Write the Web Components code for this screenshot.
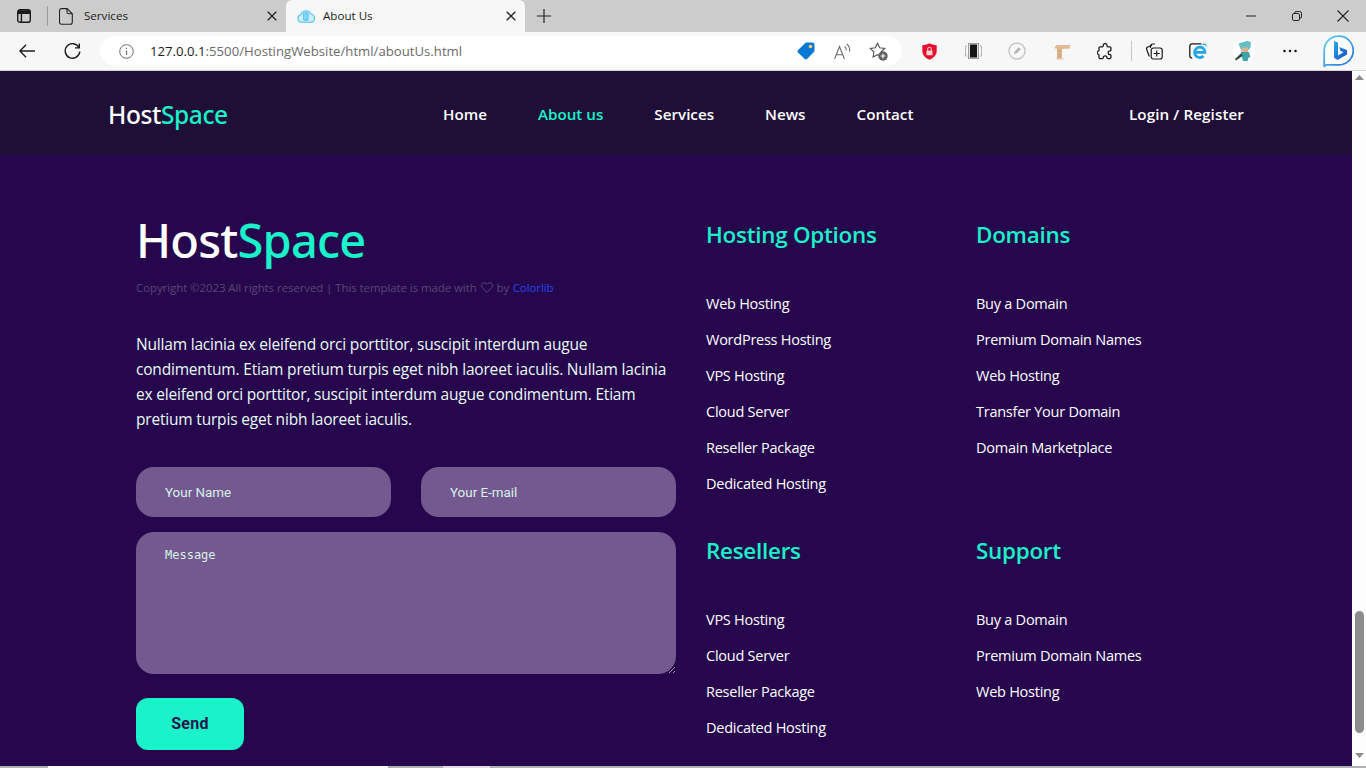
<!DOCTYPE html>
<html lang="en">
<head>
<meta charset="utf-8">
<title>About Us</title>
<style>
    html, body { margin: 0; height: 100%; overflow: hidden; }
    body { display: flex; flex-direction: column; height: 768px; font-family: "Open Sans", "Noto Sans", sans-serif; background: #26074d; }
</style>
</head>
<body>
<browser-chrome></browser-chrome>
<page-view>
    <site-nav></site-nav>
    <site-footer>
        <brand-block></brand-block>
        <contact-form></contact-form>
        <link-column slot="links" heading="Hosting Options" items="Web Hosting|WordPress Hosting|VPS Hosting|Cloud Server|Reseller Package|Dedicated Hosting"></link-column>
        <link-column slot="links" heading="Domains" items="Buy a Domain|Premium Domain Names|Web Hosting|Transfer Your Domain|Domain Marketplace"></link-column>
        <link-column slot="links" heading="Resellers" items="VPS Hosting|Cloud Server|Reseller Package|Dedicated Hosting"></link-column>
        <link-column slot="links" heading="Support" items="Buy a Domain|Premium Domain Names|Web Hosting"></link-column>
    </site-footer>
</page-view>
<desk-strip></desk-strip>

<script>
class BrowserTab extends HTMLElement {
    constructor() {
        super();
        this.attachShadow({ mode: 'open' });
    }

    connectedCallback() {
        this.shadowRoot.innerHTML = `
            <style>
                :host { display: flex; align-items: center; height: 32px; box-sizing: border-box; font-size: 11.6px; color: #1c1c1c; }
                :host([active]) { background: #f7f7f7; border-radius: 6px 6px 0 0; }
                .label { flex: 1; padding-bottom: 2px; }
                .close { width: 10px; height: 10px; margin-right: 9px; }
                ::slotted(svg) { flex: none; }
            </style>
            <slot></slot>
            <span class="label">${this.getAttribute('label')}</span>
            <svg class="close" viewBox="0 0 10 10" fill="none" stroke="#222" stroke-width="1.3"><path d="M.7.7l8.6 8.6M9.3.7L.7 9.3"/></svg>
        `;
    }
}

class ToolButton extends HTMLElement {
    constructor() {
        super();
        this.attachShadow({ mode: 'open' });
        this.shadowRoot.innerHTML = `
            <style>
                :host { display: flex; align-items: center; justify-content: center; flex: none; width: 44px; height: 38px; }
            </style>
            <slot></slot>
        `;
    }
}

class BrowserChrome extends HTMLElement {
    constructor() {
        super();
        this.attachShadow({ mode: 'open' });
    }

    connectedCallback() {
        this.shadowRoot.innerHTML = `
            <style>
                :host { display: block; flex: none; height: 71px; background: #f7f7f7; }
                .strip { display: flex; align-items: center; height: 32px; background: #cccccc; }
                .panes { margin-left: 17px; }
                .sep { width: 1px; height: 20px; background: #9a9a9a; margin: 0 11px 0 16px; }
                .tab-a { width: 227px; }
                .tab-b { width: 239px; margin-left: 0; }
                .plus { margin-left: 12px; }
                .win { display: flex; align-items: center; margin-left: auto; }
                .win svg { display: block; }
                .bar { display: flex; align-items: center; height: 38px; padding-left: 5px; border-bottom: 1px solid #d4d4d4; }
                .pill { display: flex; align-items: center; flex: none; box-sizing: border-box; width: 802px; height: 30px; margin: 0 5px 0 6px; padding-right: 5px; border-radius: 15px; background: #fff; }
                .pill tool-button { width: 36.5px; }
                .url { flex: 1; display: flex; align-items: center; font-size: 13.18px; color: #6b6b6b; white-space: nowrap; }
                .url b { font-weight: 400; color: #1c1c1c; }
                .url svg { margin: 0 16px 0 19px; }
                .div { width: 1px; height: 20px; background: #c8c8c8; margin: 0 0 0 4px; }
            </style>
            <div class="strip">
                <svg class="panes" width="14" height="14" viewBox="0 0 14 14" fill="none" stroke="#1a1a1a" stroke-width="1.4"><rect x=".7" y=".7" width="12.6" height="12.6" rx="2.4"/><path d="M.7 4.2h12.6M4.4 4.2v9" /><path d="M1 1.2h12v3H1z" fill="#1a1a1a" stroke="none"/></svg>
                <div class="sep"></div>
                <browser-tab class="tab-a" label="Services">
                    <svg width="14" height="17" viewBox="0 0 14 17" fill="none" stroke="#222" stroke-width="1.1" style="margin:0 11px 0 0"><path d="M2.5.6h5.6l5.2 5.2v8.4a2 2 0 0 1-2 2H2.5a2 2 0 0 1-2-2V2.6a2 2 0 0 1 2-2z"/><path d="M8 .8v3.4a1.6 1.6 0 0 0 1.6 1.6H13"/></svg>
                </browser-tab>
                <browser-tab class="tab-b" active label="About Us">
                    <svg width="18" height="14" viewBox="0 0 18 14" style="margin:0 8px 0 11px"><path d="M4.5 13.3a3.8 3.8 0 0 1-.6-7.5A5.2 5.2 0 0 1 13.8 5a4.2 4.2 0 0 1 .2 8.3z" fill="#cdeefc" stroke="#4fc3f3" stroke-width="1.1"/><rect x="6.5" y="3.4" width="4.6" height="8" rx=".8" fill="#7ed6f8" stroke="#3fb6ea" stroke-width=".7"/></svg>
                </browser-tab>
                <svg class="plus" width="14" height="14" viewBox="0 0 14 14" stroke="#222" stroke-width="1.2"><path d="M7 0v14M0 7h14"/></svg>
                <div class="win">
                    <tool-button style="width:46px"><svg width="10" height="2" viewBox="0 0 10 2" stroke="#222"><path d="M0 1h10"/></svg></tool-button>
                    <tool-button style="width:46px"><svg width="10" height="10" viewBox="0 0 10 10" fill="none" stroke="#222"><rect x=".5" y="2.5" width="7" height="7" rx="1.4"/><path d="M2.7 2.3V1.9A1.4 1.4 0 0 1 4.1.5h3.6a1.8 1.8 0 0 1 1.8 1.8v3.6a1.4 1.4 0 0 1-1.4 1.4"/></svg></tool-button>
                    <tool-button style="width:46px"><svg width="12" height="12" viewBox="0 0 12 12" stroke="#222" stroke-width="1.1"><path d="M.5.5l11 11M11.5.5l-11 11"/></svg></tool-button>
                </div>
            </div>
            <div class="bar">
                <tool-button><svg width="16" height="14" viewBox="0 0 16 14" fill="none" stroke="#1c1c1c" stroke-width="1.4"><path d="M16 7H1M7 .8L.9 7 7 13.2"/></svg></tool-button>
                <tool-button style="margin-left:1px"><svg width="17" height="17" viewBox="0 0 17 17" fill="none" stroke="#1c1c1c" stroke-width="1.4"><path d="M14.9 4.4A7.3 7.3 0 1 0 15.8 8.5"/><path d="M15.3.6v4.3h-4.3"/></svg></tool-button>
                <div class="pill">
                    <div class="url">
                        <svg width="15" height="15" viewBox="0 0 15 15" fill="none" stroke="#6a6a6a"><circle cx="7.5" cy="7.5" r="6.8"/><path d="M7.5 6.5v4.500M7.5 3.800v1.200" stroke-width="1.2"/></svg>
                        <span><b>127.0.0.1</b>:5500/HostingWebsite/html/aboutUs.html</span>
                    </div>
                    <tool-button><svg width="18" height="18" viewBox="0 0 18 18"><path d="M9.5.6h6a2 2 0 0 1 2 2v6a2 2 0 0 1-.6 1.4l-6.600 6.700a2 2 0 0 1-2.800 0L1.200 10.800a2 2 0 0 1 0-2.800L8 1.200A2 2 0 0 1 9.500.6z" fill="#0a78d4"/><circle cx="13.500" cy="4.500" r="1.700" fill="#ffd75e"/></svg></tool-button>
                    <tool-button><svg width="17" height="17" viewBox="0 0 17 17" fill="none" stroke="#6a6a6a" stroke-width="1.1"><path d="M.6 16L5.500 3.500 10.400 16M2.300 11.700h6.400"/><path d="M10.600 3.200a4.500 4.500 0 0 1 1.500 4.300M12.800 1a7.500 7.500 0 0 1 2.700 7.500"/></svg></tool-button>
                    <tool-button><svg width="19" height="19" viewBox="0 0 19 19"><path d="M8.500 1.200l2.200 4.600 5 .7-3.600 3.500.8 5-4.400-2.300-4.400 2.300.8-5L1.300 6.500l5-.7z" fill="none" stroke="#555" stroke-width="1.1"/><circle cx="14" cy="14" r="4.700" fill="#5f5f5f"/><path d="M14 11.600v4.800M11.600 14h4.800" stroke="#fff" stroke-width="1.1"/></svg></tool-button>
                </div>
                <tool-button><svg width="15" height="17" viewBox="0 0 15 17"><path d="M7.500.3C9.500 1.500 12 2.100 14.700 2.200V8c0 4-3 7.200-7.200 8.700C3.300 15.200.3 12 .3 8V2.200C3 2.100 5.500 1.500 7.500.3z" fill="#e8112d"/><rect x="4.500" y="7.500" width="6" height="4.800" rx=".6" fill="#fbd6da"/><path d="M5.700 7.500V6a1.800 1.800 0 0 1 3.600 0v1.500" fill="none" stroke="#fbd6da"/></svg></tool-button>
                <tool-button><svg width="17" height="16" viewBox="0 0 17 16"><rect x="3.500" y=".5" width="10" height="15" fill="#e4e4e4" stroke="#9d9d9d"/><rect x="5" y="1.500" width="7" height="13" fill="#161616"/><path d="M2 3H.5v10H2M15 3h1.500v10H15" fill="none" stroke="#b5b5b5"/></svg></tool-button>
                <tool-button><svg width="18" height="18" viewBox="0 0 18 18" fill="none"><circle cx="9" cy="9" r="8" stroke="#c6c6c6" stroke-width="1.4"/><path d="M5.800 12.300l1-3 4-4 2.100 2-4 4z" fill="#b5b5b5"/></svg></tool-button>
                <tool-button style="margin-left:1px"><svg width="17" height="18" viewBox="0 0 17 18"><ellipse cx="6" cy="16.800" rx="4.500" ry="1.200" fill="#e6e0da"/><rect x="3" y="3.500" width="5" height="13" rx="1" fill="#dcae86"/><path d="M3 3.500h5v2H3z" fill="#c08d62"/><path d="M1 4.500l2-1.500h13v3.500L7.500 7 4 6.800 1 6.500z" fill="#e3b892"/></svg></tool-button>
                <tool-button style="margin-left:-1px"><svg width="16" height="17" viewBox="0 0 16 17" fill="none" stroke="#1c1c1c" stroke-width="1.3"><path d="M6.200 3V2.500a1.900 1.900 0 0 1 3.800 0V3c0 .5.300.8.800.8h2.100c.6 0 1 .4 1 1v2.400c0 .4-.4.700-.8.700a1.900 1.900 0 0 0 0 3.800c.4 0 .8.300.8.700v2.200c0 .6-.4 1-1 1H10.700c-.4 0-.7-.4-.7-.8a1.900 1.900 0 0 0-3.800 0c0 .4-.3.800-.7.800H3c-.6 0-1-.4-1-1v-2.600c0-.4-.3-.7-.7-.7a1.800 1.800 0 0 1 0-3.300c.4 0 .7-.3.700-.7V4.800c0-.6.400-1 1-1h2.400c.5 0 .8-.3.800-.8z"/></svg></tool-button>
                <div class="div"></div>
                <tool-button><svg width="18" height="18" viewBox="0 0 18 18" fill="none" stroke="#1c1c1c" stroke-width="1.2"><path d="M4.300 14.500L1.700 7.500C1.300 6.400 1.800 5.400 2.800 5L7 3.300"/><path d="M6.500 5V3a2 2 0 0 1 2-2h2.500" transform="translate(-1 1)"/><rect x="6.200" y="6" width="11" height="11" rx="2.200"/><path d="M11.700 8.500v6M8.700 11.500h6"/></svg></tool-button>
                <tool-button><svg width="18" height="17" viewBox="0 0 18 17" fill="none"><path d="M12.500.8H3.200A2.500 2.500 0 0 0 .8 3.200v9.600a2.500 2.500 0 0 0 2.400 2.400" stroke="#1c1c1c" stroke-width="1.3"/><path d="M5.800 9.300h10.200A5.200 5.200 0 1 0 14.500 13" stroke="#1ea7e8" stroke-width="2.700"/><path d="M13.500 1.800c2.600-1.300 3.800-.6 3.300 1.600" stroke="#1ea7e8" stroke-width="1.200"/></svg></tool-button>
                <tool-button style="margin-left:2px"><svg width="22" height="22" viewBox="0 0 22 22"><circle cx="11" cy="11" r="11" fill="#fff"/><path d="M5.500 3.500L14.500.8 18 2.500l-.5 5-2 2.500H8z" fill="#66bfc4"/><rect x="8.500" y="7.500" width="6.500" height="4.500" fill="#d8b490"/><path d="M8 12h8l1.500 5.500H15.500l-1 3.500h-4.500l-1-3.500z" fill="#3fa3a8"/><path d="M8.500 13L2 19l1 1.500L9.500 16z" fill="#2c4a43"/></svg></tool-button>
                <tool-button style="margin-left:2px"><svg width="14" height="4" viewBox="0 0 14 4" fill="#1c1c1c"><circle cx="1.500" cy="2" r="1.300"/><circle cx="7" cy="2" r="1.300"/><circle cx="12.500" cy="2" r="1.300"/></svg></tool-button>
                <tool-button style="margin-left:4px"><svg width="31" height="33" viewBox="0 0 31 33"><defs><linearGradient id="bing-line" x1="0" y1="0" x2="1" y2="1"><stop offset="0" stop-color="#63d0f5"/><stop offset="1" stop-color="#1f6fd8"/></linearGradient><linearGradient id="bing-b" x1="0" y1="0" x2="1" y2="1"><stop offset="0" stop-color="#25a8e8"/><stop offset="1" stop-color="#1b4fc4"/></linearGradient></defs><path d="M15.500 1.200a14.300 14.300 0 0 1 1 28.600H3.500c-1.500 0-2.200 1.600-2.300 2.200V15.500A14.300 14.300 0 0 1 15.500 1.200z" fill="#fff" stroke="url(#bing-line)" stroke-width="1.800"/><path d="M11 6l4 1.400v13.100l5.500-3.200-3-1.300-1.500-4 8 3v4.500l-9.500 5.500-3.500-2.300z" fill="url(#bing-b)"/></svg></tool-button>
            </div>
        `;
    }
}

class PageView extends HTMLElement {
    constructor() {
        super();
        this.attachShadow({ mode: 'open' });
        this.shadowRoot.innerHTML = `
            <style>
                :host { display: flex; flex: 1; min-height: 0; overflow: hidden; }
                .content { flex: 1; min-width: 0; display: flex; flex-direction: column; }
                .track { flex: none; width: 14px; display: flex; flex-direction: column; align-items: center; background: #fdfdfd; }
                .up { margin-top: 4px; }
                .thumb { width: 9px; height: 122px; margin-top: 531px; border-radius: 5px; background: #8c8c8c; }
                .down { margin-top: 20px; }
            </style>
            <div class="content"><slot></slot></div>
            <div class="track">
                <svg class="up" width="9" height="5" viewBox="0 0 9 5" fill="#8c8c8c"><path d="M4.500 0L9 5H0z"/></svg>
                <div class="thumb"></div>
                <svg class="down" width="9" height="5" viewBox="0 0 9 5" fill="#8c8c8c"><path d="M0 0h9L4.500 5z"/></svg>
            </div>
        `;
    }
}

class SiteNav extends HTMLElement {
    constructor() {
        super();
        this.attachShadow({ mode: 'open' });
        this.shadowRoot.innerHTML = `
            <style>
                :host { display: flex; flex: none; align-items: center; box-sizing: border-box; height: 84px; padding: 1px 0 0 108px; background: #1f0f36; color: #fff; font-size: 15.2px; font-weight: 600; }
                .logo { width: 335px; padding-top: 2px; font-family: "Noto Sans", sans-serif; font-size: 24.5px; font-weight: 500; letter-spacing: -.4px; color: #fff; }
                .logo span { color: #1af2c9; }
                nav { display: flex; gap: 51px; }
                nav a, .login { color: inherit; text-decoration: none; white-space: nowrap; }
                nav a.on { color: #1af2c9; }
                .login { margin-left: auto; margin-right: 108px; letter-spacing: .1px; }
            </style>
            <div class="logo">Host<span>Space</span></div>
            <nav>
                <a href="#">Home</a>
                <a href="#" class="on">About us</a>
                <a href="#">Services</a>
                <a href="#">News</a>
                <a href="#">Contact</a>
            </nav>
            <a href="#" class="login">Login / Register</a>
        `;
    }
}

class SiteFooter extends HTMLElement {
    constructor() {
        super();
        this.attachShadow({ mode: 'open' });
        this.shadowRoot.innerHTML = `
            <style>
                :host { display: grid; flex: 1; grid-template-columns: 570px 540px; padding: 49px 0 0 136px; background: #26074d; align-content: start; }
                .left { width: 540px; }
                .links { display: grid; grid-template-columns: 270px 270px; grid-template-rows: 316px auto; }
            </style>
            <div class="left"><slot></slot></div>
            <div class="links"><slot name="links"></slot></div>
        `;
    }
}

class BrandBlock extends HTMLElement {
    constructor() {
        super();
        this.attachShadow({ mode: 'open' });
        this.shadowRoot.innerHTML = `
            <style>
                :host { display: block; color: #fff; }
                .logo { font-family: "Noto Sans", sans-serif; font-size: 47px; font-weight: 500; line-height: 72px; letter-spacing: -.8px; }
                .logo span { color: #1af2c9; }
                .copy { display: flex; align-items: center; margin-top: 1px; height: 20px; font-size: 11.5px; letter-spacing: -.09px; color: #5a4675; white-space: nowrap; }
                .copy svg { margin: 0 4px; }
                .copy a { color: #1f48ee; text-decoration: none; margin-left: 3.5px; }
                p { margin: 35px 0 0; font-size: 15.5px; line-height: 25px; color: #e9fbf6; letter-spacing: -.19px; }
            </style>
            <div class="logo">Host<span>Space</span></div>
            <div class="copy">Copyright ©2023 All rights reserved | This template is made with<svg width="12" height="11" viewBox="0 0 12 11" fill="none" stroke="#5a4675"><path d="M6 10.300L1.200 5.500A2.800 2.800 0 0 1 5.200 1.500L6 2.300l.8-.8a2.800 2.800 0 0 1 4 4z"/></svg>by<a href="#">Colorlib</a></div>
            <p>Nullam lacinia ex eleifend orci porttitor, suscipit interdum augue condimentum. Etiam pretium turpis eget nibh laoreet iaculis. Nullam lacinia ex eleifend orci porttitor, suscipit interdum augue condimentum. Etiam pretium turpis eget nibh laoreet iaculis.</p>
        `;
    }
}

class ContactForm extends HTMLElement {
    constructor() {
        super();
        this.attachShadow({ mode: 'open' });
        this.shadowRoot.innerHTML = `
            <style>
                :host { display: block; margin-top: 35px; }
                .row { display: flex; gap: 30px; }
                input, textarea { display: block; box-sizing: border-box; width: 100%; border: 0; background: #735990; color: #d6f2e6; outline: none; }
                input { height: 50px; padding: 0 29px; border-radius: 18px; font: 400 13.4px Roboto, sans-serif; }
                textarea { height: 142px; margin-top: 15px; padding: 16px 29px; border-radius: 18px; font: 12px "DejaVu Sans Mono", monospace; }
                ::placeholder { color: #d6f2e6; opacity: 1; }
                button { display: block; width: 108px; height: 52px; margin-top: 24px; padding: 0 0 2px; border: 0; border-radius: 12px; background: #1af2c9; color: #26174d; font: 700 16px Roboto, sans-serif; letter-spacing: .3px; }
            </style>
            <form>
                <div class="row">
                    <input type="text" placeholder="Your Name">
                    <input type="text" placeholder="Your E-mail">
                </div>
                <textarea placeholder="Message"></textarea>
                <button type="button">Send</button>
            </form>
        `;
    }
}

class LinkColumn extends HTMLElement {
    constructor() {
        super();
        this.attachShadow({ mode: 'open' });
    }

    connectedCallback() {
        const items = this.getAttribute('items').split('|');
        this.shadowRoot.innerHTML = `
            <style>
                :host { display: block; }
                h3 { margin: 13px 0 33px; font-size: 22.4px; line-height: 36px; font-weight: 600; color: #1af2c9; letter-spacing: -.25px; }
                ul { margin: 0; padding: 0; list-style: none; }
                li { height: 36px; font-size: 14.5px; line-height: 36px; letter-spacing: -.25px; color: #fff; white-space: nowrap; }
                a { color: inherit; text-decoration: none; }
            </style>
            <h3>${this.getAttribute('heading')}</h3>
            <ul>${items.map(item => `<li><a href="#">${item}</a></li>`).join('')}</ul>
        `;
    }
}

class DeskStrip extends HTMLElement {
    constructor() {
        super();
        this.attachShadow({ mode: 'open' });
        this.shadowRoot.innerHTML = `
            <style>
                :host { display: flex; flex: none; height: 2px; background: #b3b0b3; }
                .a { margin-left: 48px; width: 340px; background: #fdfdfd; }
                .b { margin-left: 55px; width: 47px; background: #e4d8ea; }
            </style>
            <div class="a"></div>
            <div class="b"></div>
        `;
    }
}

customElements.define('browser-tab', BrowserTab);
customElements.define('tool-button', ToolButton);
customElements.define('browser-chrome', BrowserChrome);
customElements.define('page-view', PageView);
customElements.define('site-nav', SiteNav);
customElements.define('site-footer', SiteFooter);
customElements.define('brand-block', BrandBlock);
customElements.define('contact-form', ContactForm);
customElements.define('link-column', LinkColumn);
customElements.define('desk-strip', DeskStrip);
</script>
</body>
</html>
